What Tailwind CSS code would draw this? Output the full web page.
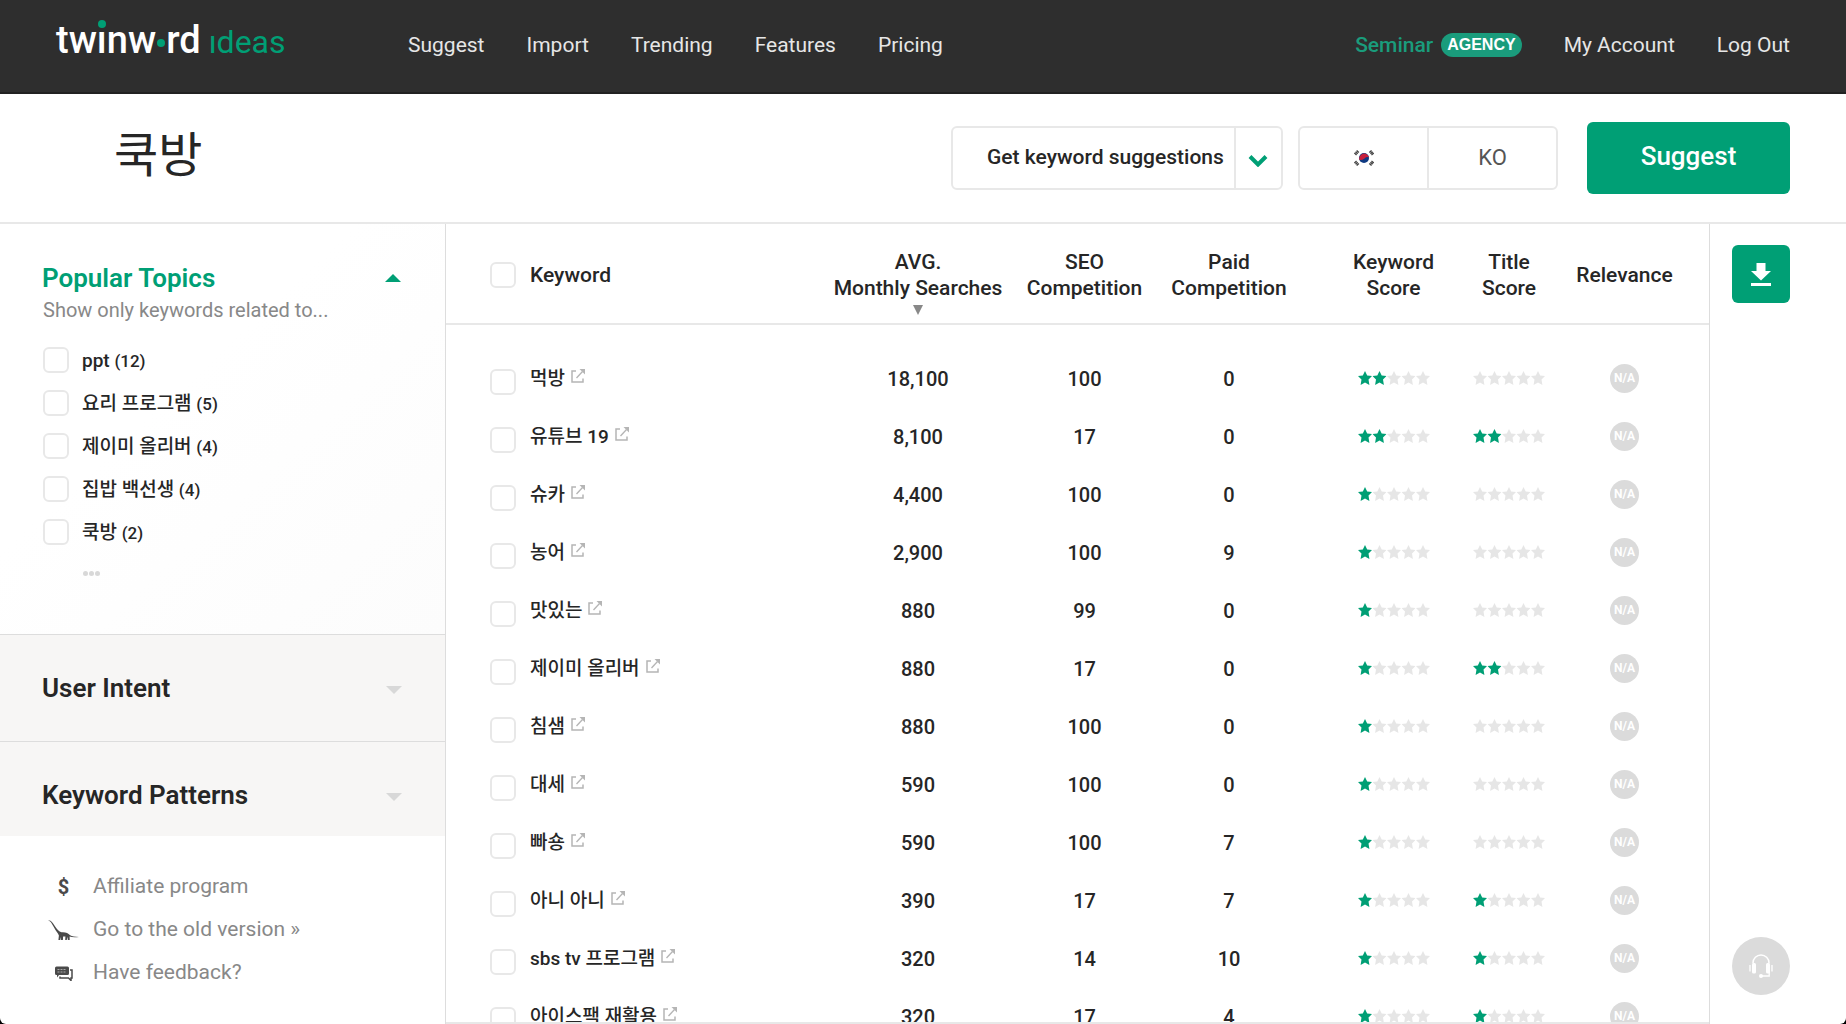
<!DOCTYPE html>
<html lang="en" class="h-full bg-black">
<head>
<meta charset="utf-8">
<meta name="viewport" content="width=device-width, initial-scale=1">
<title>Twinword Ideas</title>
<script src="https://cdn.jsdelivr.net/npm/@tailwindcss/browser@4"></script>
</head>
<body class="h-full font-[Roboto,'Noto_Sans_CJK_KR',sans-serif] text-[#262626]">
<svg class="hidden" aria-hidden="true">
  <symbol id="star" viewBox="0 0 14 15"><path d="M7 0l2.2 4.500 4.800.6-3.500 3.500.9 5.400L7 11.600 2.600 14l.9-5.400L0 5.100l4.800-.6z"/></symbol>
  <symbol id="external" viewBox="0 0 14 14"><path d="M5 2H1v11h11V9.500" fill="none" stroke="currentColor" stroke-width="1.500"/><path d="M5.500 9l6-6.500" fill="none" stroke="currentColor" stroke-width="1.300"/><path d="M8.500 0H14v5.500z" fill="currentColor"/></symbol>
</svg>

<div class="flex h-screen flex-col overflow-hidden rounded-b-md bg-white">

  <header class="flex h-[94px] shrink-0 items-start border-b-2 border-[#222] bg-[#2e2e2e] pr-[56px] pl-[56px] text-[21px] leading-6 text-[#e6e6e6]">
    <a href="#" aria-label="twinword ideas" class="flex w-[352px] shrink-0 items-baseline pt-4 text-[38px] leading-12 font-medium text-white">
      <span>tw</span><span class="relative">ı<span class="absolute top-1 left-1/2 size-2 -translate-x-1/2 rounded-full bg-[#009f75]"></span></span><span>nw</span>
      <span class="mx-px size-2 -translate-y-1.5 rounded-full bg-[#009f75]"></span><span>rd</span>
      <span class="ml-2 text-[32px] font-normal text-[#009f75]">ıdeas</span>
    </a>
    <nav class="flex gap-[42px] pt-[33px]">
      <a href="#">Suggest</a><a href="#">Import</a><a href="#">Trending</a><a href="#">Features</a><a href="#">Pricing</a>
    </nav>
    <div class="ml-auto flex items-center gap-[42px] pt-[33px]">
      <a href="#" class="flex items-center gap-2 font-medium text-[#1a9c7c]">Seminar
        <span class="rounded-full bg-[#1a9c7c] px-1.5 text-base leading-6 font-bold text-white font-['Liberation_Sans',sans-serif]">AGENCY</span></a>
      <a href="#">My Account</a>
      <a href="#">Log Out</a>
    </div>
  </header>

  <section class="flex h-[130px] shrink-0 items-center border-b-2 border-[#e8e8e8] pr-[56px] pl-[114px]">
    <h1 class="mr-auto pb-1 text-[48px] leading-16 font-normal">쿡방</h1>
    <form class="flex items-center" onsubmit="return false">
      <div class="relative mr-[15px] h-16 w-[332px]">
        <select aria-label="Mode" class="size-full appearance-none rounded-md border-2 border-[#e8e8e8] bg-white pl-[34px] text-[21px] font-medium"><option>Get keyword suggestions</option></select>
        <span class="pointer-events-none absolute inset-y-0 right-0 flex w-[49px] items-center justify-center border-l-2 border-[#e8e8e8] pt-1.5 pr-1">
          <svg class="h-3 w-5" viewBox="0 0 20 12" fill="none" stroke="#009f75" stroke-width="4"><path d="M2 1.500l8 8 8-8"/></svg>
        </span>
      </div>
      <div class="mr-[29px] flex h-16 w-[260px] rounded-md border-2 border-[#e8e8e8] text-[22px] text-[#555]">
        <button type="button" aria-label="South Korea" class="flex flex-1 items-center justify-center border-r-2 border-[#e8e8e8]">
          <svg class="h-4 w-5" viewBox="0 0 20 16"><g stroke="#444" stroke-width="3" stroke-dasharray="1.400 .3"><path d="M1 4.500l3.200-3.500"/><path d="M16 1l3 3.500"/><path d="M1 11.500l3.200 3.500"/><path d="M16 15l3-3.500"/></g><circle cx="10" cy="8" r="5" fill="#0f3a82"/><path d="M5.400 10A5 5 0 0 1 15 7.200Q12.500 6.500 10.500 8.400T5.400 10z" fill="#c8203c"/></svg>
        </button>
        <button type="button" class="flex-1 pb-0.5">KO</button>
      </div>
      <button type="submit" class="h-[72px] w-[203px] rounded-md bg-[#009f75] pb-1 text-[26px] font-medium text-white">Suggest</button>
    </form>
  </section>

  <main class="flex min-h-0 flex-1">
    <aside class="flex w-[446px] shrink-0 flex-col border-r border-[#ddd]">
      <div class="min-h-0 flex-1 overflow-hidden">
        <section class="h-[410px] bg-linear-to-br from-white from-40% to-[#fcfcfc] pt-[38px] pr-[43px] pl-[43px]">
          <button type="button" class="-ml-px flex w-full items-center justify-between text-[26px] leading-8 font-semibold text-[#009f75]">Popular Topics
            <svg class="h-2 w-4" viewBox="0 0 16 8" fill="currentColor"><path d="M0 8l8-8 8 8z"/></svg></button>
          <p class="text-xl leading-8 text-[#888]">Show only keywords related to...</p>
          <ul id="topics" class="mt-3"></ul>
          <button type="button" aria-label="More topics" class="ml-10 flex h-10 items-center gap-px">
            <span class="size-[5px] rounded-full bg-[#d8d8d8]"></span><span class="size-[5px] rounded-full bg-[#d8d8d8]"></span><span class="size-[5px] rounded-full bg-[#d8d8d8]"></span></button>
        </section>
        <button type="button" class="flex h-[107px] w-full items-center justify-between border-t border-[#ddd] bg-[#f7f6f5] pr-[43px] pl-[42px] text-[26px] font-semibold">User Intent
          <svg class="mt-1 h-2 w-4" viewBox="0 0 16 8" fill="#d8d8d8"><path d="M0 0h16L8 8z"/></svg></button>
        <button type="button" class="flex h-[107px] w-full items-center justify-between border-t border-[#ddd] bg-[#f7f6f5] pr-[43px] pl-[42px] text-[26px] font-semibold">Keyword Patterns
          <svg class="mt-1 h-2 w-4" viewBox="0 0 16 8" fill="#d8d8d8"><path d="M0 0h16L8 8z"/></svg></button>
      </div>
      <ul class="h-[188px] shrink-0 pt-[29px] pl-[46px] text-[21px] text-[#888]">
        <li><a href="#" class="flex h-[43px] items-center gap-3"><span class="flex w-[35px] justify-center text-xl font-bold text-[#4a4a4a]" aria-hidden="true">$</span>Affiliate program</a></li>
        <li><a href="#" class="flex h-[43px] items-center gap-3">
          <svg class="h-6 w-[35px]" viewBox="0 0 35 24" fill="#4a4a4a"><path d="M2 2.300l2.500.4c2 1.300 3.400 4 5 6.300 1.700 2.400 3.400 4.700 6 5.300 4-.4 6.500.8 8.600 3 2 1.300 5 1.400 8.900 1.600-3.500.5-7 .5-9.400-.3l.1 3.400h-1.800l-.6-3.300-.5 3.300h-1.600l.2-3.500h-2.300l-.2 3.600h-1.800l-.3-3-.5 3h-1.900l.5-4.500c-.9-2.500-2.700-4.200-4-6.600C7.200 8.200 5.600 4.700 4.200 3.500z"/></svg>Go to the old version »</a></li>
        <li><a href="#" class="flex h-[43px] items-center gap-3">
          <svg class="h-4 w-[35px]" viewBox="0 0 35 16"><path d="M24 5h2v8h-1v2.500L22.500 13H14v-1.500" fill="none" stroke="#4a4a4a" stroke-width="1.500"/><path d="M10.500 1.500h11q1.500 0 1.500 1.500v5.500q0 1.500-1.500 1.500H13l-2 2.500V10h-.5Q9 10 9 8.500V3q0-1.500 1.500-1.500z" fill="#4a4a4a"/><path d="M11.500 4.500h9M11.500 7h9" stroke="#aaa" stroke-dasharray="2 1"/></svg>Have feedback?</a></li>
      </ul>
    </aside>

    <div class="min-w-0 flex-1 overflow-hidden border-b-2 border-[#e8e8e8]">
      <table class="w-full table-fixed border-separate border-spacing-0 text-center text-xl font-medium">
        <colgroup><col><col class="w-[190px]"><col class="w-[143px]"><col class="w-[146px]"><col class="w-[149px]"><col class="w-[116px]"><col class="w-[142px]"></colgroup>
        <thead>
          <tr class="h-[101px] text-[21px] leading-[26px] *:border-b-2 *:border-[#e8e8e8] *:p-0 *:pt-0.5 *:font-medium">
            <th scope="col"><label class="flex items-center gap-3.5 pl-11"><input type="checkbox" class="size-[26px] appearance-none rounded-md border-2 border-[#e8e8e8]">Keyword</label></th>
            <th scope="col" aria-sort="descending" class="relative">AVG.<br>Monthly Searches
              <svg class="absolute bottom-2 left-1/2 h-2.5 w-2.5 -translate-x-1/2" viewBox="0 0 10 10" fill="#888"><path d="M0 0h10L5 10z"/></svg></th>
            <th scope="col">SEO<br>Competition</th>
            <th scope="col">Paid<br>Competition</th>
            <th scope="col"><div class="pl-[34px]">Keyword<br>Score</div></th>
            <th scope="col">Title<br>Score</th>
            <th scope="col"><div class="pr-[27px]">Relevance</div></th>
          </tr>
        </thead>
        <tbody id="rows"><tr class="h-[25px]" aria-hidden="true"><td colspan="7"></td></tr></tbody>
      </table>
    </div>

    <aside class="flex w-[137px] shrink-0 flex-col items-start justify-between border-l border-[#ddd] pt-[21px] pb-[29px] pl-[22px]">
      <button type="button" aria-label="Download" class="flex size-[58px] items-center justify-center rounded-md bg-[#009f75]">
        <svg class="h-6 w-5" viewBox="0 0 20 24" fill="#fff"><path d="M5.500 1h9v8H20l-10 9.500L0 9h5.500zM0 21h20v3H0z"/></svg></button>
      <button type="button" aria-label="Support" class="flex size-[58px] items-center justify-center rounded-full bg-[#dbdbdb]">
        <svg class="size-6" viewBox="0 0 24 24" fill="none" stroke="#fff"><path d="M4 9.500V9a8 8 0 0 1 16 0v.5" stroke-width="1.500"/><rect x="3" y="9" width="4" height="10.500" rx="1.500" fill="#fff" stroke="none"/><rect x="17" y="9" width="4" height="10.500" rx="1.500" fill="#fff" stroke="none"/><path d="M1 11v6.500M23 11v6.500" stroke-width="1.300"/><path d="M20.200 18v4H12" stroke-width="1.300"/><circle cx="12" cy="22" r="2" fill="#fff" stroke="none"/></svg></button>
    </aside>
  </main>
</div>

<script>
const topics = [['ppt',12],['요리 프로그램',5],['제이미 올리버',4],['집밥 백선생',4],['쿡방',2]];
const rows = [
  ['먹방','18,100',100,0,2,0],['유튜브 19','8,100',17,0,2,2],['슈카','4,400',100,0,1,0],['농어','2,900',100,9,1,0],
  ['맛있는','880',99,0,1,0],['제이미 올리버','880',17,0,1,2],['침샘','880',100,0,1,0],['대세','590',100,0,1,0],
  ['빠숑','590',100,7,1,0],['아니 아니','390',17,7,1,1],['sbs tv 프로그램','320',14,10,1,1],['아이스팩 재활용','320',17,4,1,1]];
const stars = n => `<svg class="mx-auto h-[15px] w-[72px]" viewBox="0 0 72 15" role="img" aria-label="${n} of 5">` +
  [0,1,2,3,4].map(i => `<use href="#star" x="${i*14.5}" width="14" height="15" fill="${i<n?'#009f75':'#e6e6e6'}"/>`).join('') + '</svg>';
document.getElementById('topics').innerHTML = topics.map(([t,n]) =>
  `<li><label class="flex h-[43px] items-center gap-[13px] text-[19px] font-medium"><input type="checkbox" class="size-[26px] appearance-none rounded-md border-2 border-[#e8e8e8] bg-white"><span class="pt-1">${t} <span class="text-[17px]">(${n})</span></span></label></li>`).join('');
document.getElementById('rows').insertAdjacentHTML('beforeend', rows.map(([k,s,seo,paid,ks,ts],i) =>
  `<tr class="h-[58px] *:p-0">
    <td><div class="flex items-center gap-3.5 pl-11"><input id="k${i}" type="checkbox" class="mt-1.5 size-[26px] appearance-none rounded-md border-2 border-[#e8e8e8]"><label for="k${i}" class="text-[19px]">${k}</label><a href="#" aria-label="Open ${k}" class="-ml-2 mb-1.5 text-[#b5b5b5]"><svg class="size-3.5"><use href="#external"/></svg></a></div></td>
    <td>${s}</td><td>${seo}</td><td>${paid}</td>
    <td><div class="pb-0.5 pl-[34px]">${stars(ks)}</div></td><td><div class="pb-0.5">${stars(ts)}</div></td>
    <td><div class="pr-[27px] pb-0.5"><span class="mx-auto flex size-[29px] items-center justify-center rounded-full bg-[#dbdbdb] text-xs font-bold text-white">N/A</span></div></td>
  </tr>`).join(''));
</script>
</body>
</html>
